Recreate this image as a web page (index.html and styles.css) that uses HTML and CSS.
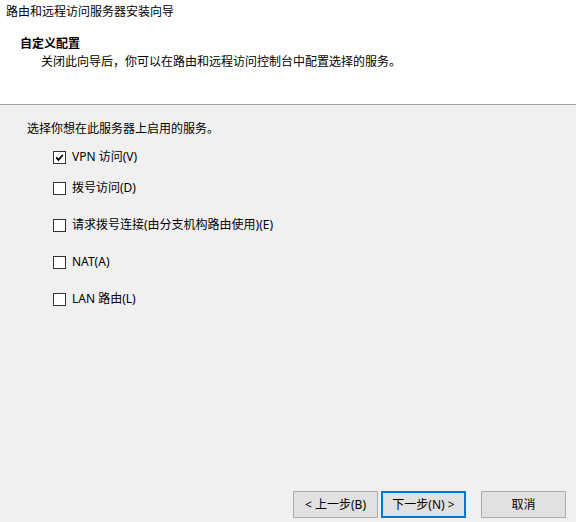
FILE: index.html
```html
<!DOCTYPE html>
<html lang="zh-CN">
<head>
<meta charset="utf-8">
<link rel="stylesheet" href="styles.css">
</head>
<body>
<div class="window">
  <div class="header">
    <div class="title">路由和远程访问服务器安装向导</div>
    <div class="heading">自定义配置</div>
    <div class="subtitle">关闭此向导后，你可以在路由和远程访问控制台中配置选择的服务。</div>
  </div>
  <div class="content">
    <div class="prompt">选择你想在此服务器上启用的服务。</div>
    <div class="options">
      <div class="row tight"><span class="box checked"><svg viewBox="0 0 13 13" width="13" height="13"><path d="M3.2 6.4 L5.4 8.8 L9.8 4" fill="none" stroke="#000" stroke-width="1.8"/></svg></span><span>VPN 访问(V)</span></div>
      <div class="row"><span class="box"></span><span>拨号访问(D)</span></div>
      <div class="row"><span class="box"></span><span>请求拨号连接(由分支机构路由使用)(E)</span></div>
      <div class="row"><span class="box"></span><span>NAT(A)</span></div>
      <div class="row"><span class="box"></span><span>LAN 路由(L)</span></div>
    </div>
  </div>
  <div class="footer">
    <div class="btn">&lt; 上一步(B)</div>
    <div class="btn focused">下一步(N) &gt;</div>
    <div class="btn cancel">取消</div>
  </div>
</div>
</body>
</html>
```

FILE: styles.css
```css
html, body {
  margin: 0;
  padding: 0;
}
body {
  font-family: "Noto Sans", "Noto Sans CJK SC", sans-serif;
  font-size: 12px;
  line-height: 16px;
  color: #000;
  background: #f0f0f0;
}
.window {
  width: 576px;
  height: 522px;
  display: flex;
  flex-direction: column;
}
.header {
  background: #fff;
  height: 105px;
  box-sizing: border-box;
  padding-top: 4px;
  border-bottom: 1px solid #a0a0a0;
  display: flex;
  flex-direction: column;
}
.title {
  padding-left: 6px;
}
.heading {
  margin-top: 16px;
  padding-left: 20px;
  font-weight: bold;
}
.subtitle {
  margin-top: 2px;
  padding-left: 41px;
}
.content {
  flex: 1;
  padding-top: 16px;
  padding-left: 27px;
  display: flex;
  flex-direction: column;
}
.options {
  margin-top: 12px;
  padding-left: 26px;
  display: flex;
  flex-direction: column;
  gap: 21px;
}
.row {
  display: flex;
  align-items: center;
  height: 16px;
  gap: 6px;
}
.row.tight {
  margin-bottom: -6px;
}
.box {
  width: 13px;
  height: 13px;
  box-sizing: border-box;
  border: 1px solid #333;
  background: #fff;
  position: relative;
}
.box svg {
  position: absolute;
  left: -1px;
  top: -1px;
}
.footer {
  display: flex;
  justify-content: flex-end;
  align-items: center;
  padding: 0 10px 4px 0;
  gap: 3px;
}
.btn {
  width: 85px;
  height: 27px;
  box-sizing: border-box;
  border: 1px solid #adadad;
  background: #e1e1e1;
  display: flex;
  align-items: center;
  justify-content: center;
}
.btn.focused {
  border: 2px solid #0078d7;
}
.btn.cancel {
  margin-left: 12px;
}
```
